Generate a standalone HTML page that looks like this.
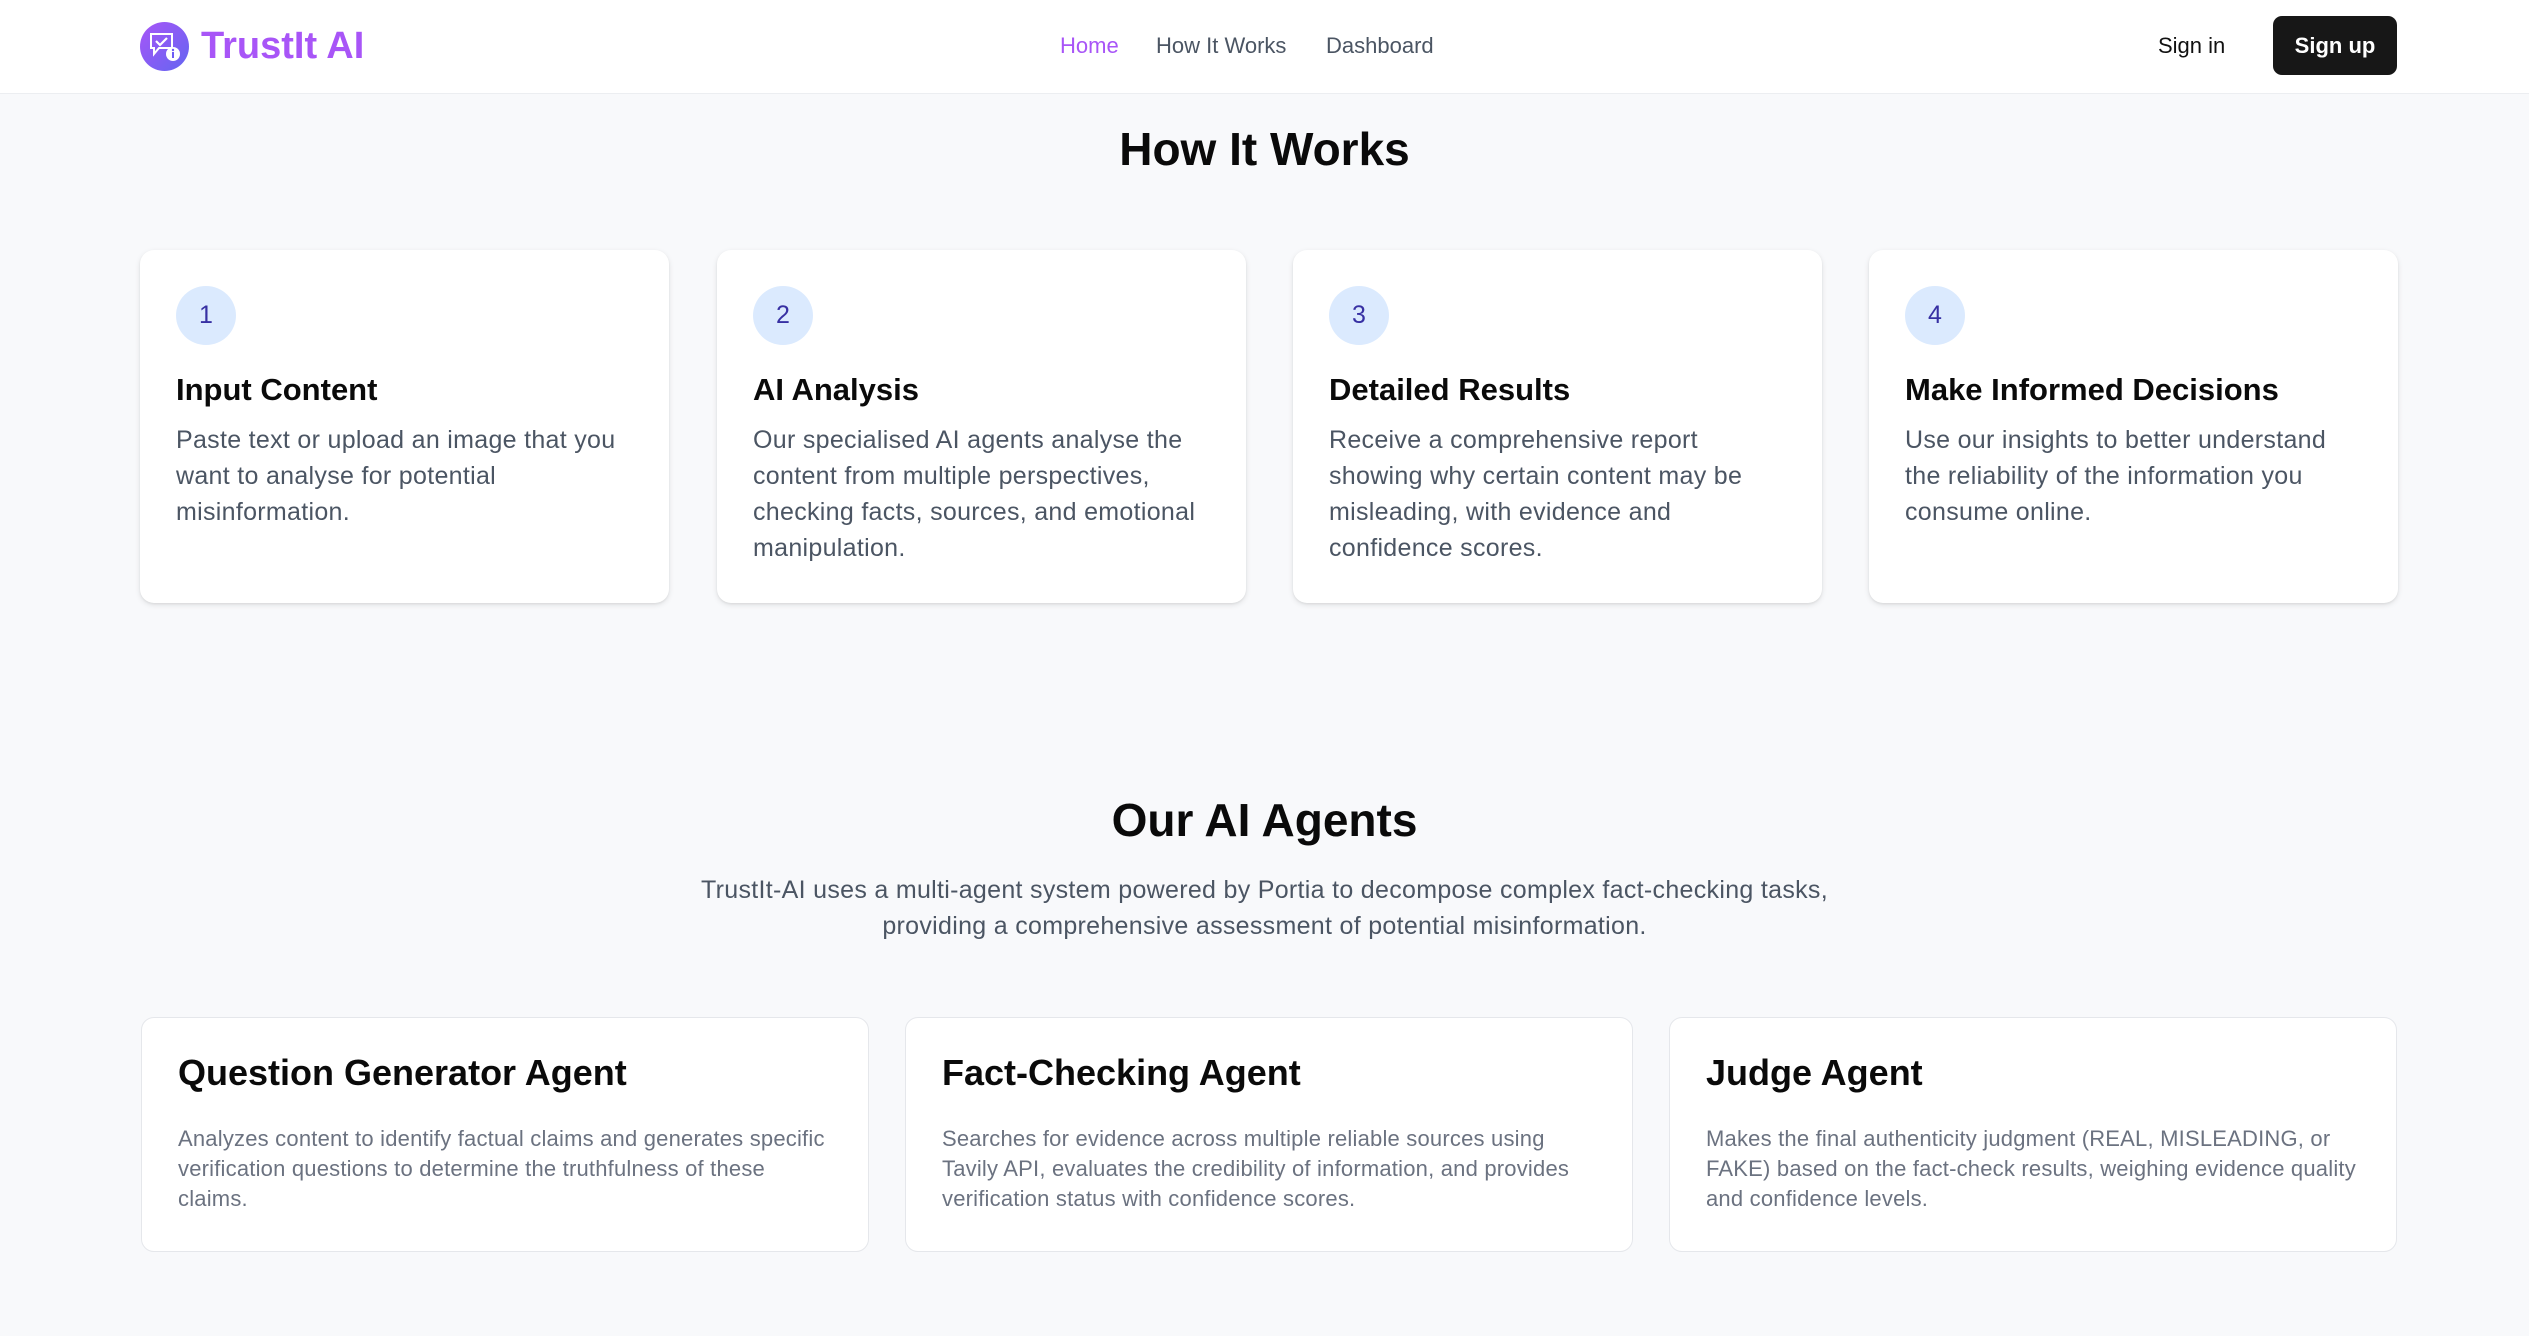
<!DOCTYPE html>
<html><head><meta charset="utf-8"><style>
*{margin:0;padding:0;box-sizing:border-box}
body{width:2529px;height:1336px;background:#f8f9fb;font-family:"Liberation Sans",Arial,sans-serif;position:relative;overflow:hidden;color:#0a0a0a}
.hdr{position:absolute;left:0;top:0;width:2529px;height:94px;background:#fff;border-bottom:1px solid #eceef1}
.a{position:absolute;white-space:nowrap}
.nav{font-size:22px;color:#4b5563;top:33px}
h2{position:absolute;left:0;width:2529px;text-align:center;font-size:46px;font-weight:700}
.card{position:absolute;top:250px;width:529px;height:353px;background:#fff;border-radius:14px;box-shadow:0 2px 6px rgba(0,0,0,.1),0 1px 2px rgba(0,0,0,.06);padding:36px}
.num{width:60px;height:59px;border-radius:50%;background:#dbeafe;color:#3730a3;font-size:25px;text-align:center;line-height:59px}
.card h3{font-size:31px;font-weight:600;margin-top:25px;line-height:40px}
.card p{font-size:25px;line-height:36px;color:#4b5563;margin-top:12px;letter-spacing:0.3px;padding-right:14px}
.ag{position:absolute;top:1017px;width:728px;height:235px;background:#fff;border:1px solid #e5e7eb;border-radius:13px;padding:32px 36px}
.ag h3{font-size:36px;font-weight:600;line-height:46px}
.ag p{font-size:22px;line-height:30px;color:#6b7280;margin-top:28px;letter-spacing:0.2px}
</style></head><body>
<div class="hdr"></div>
<svg class="a" style="left:140px;top:22px" width="49" height="49" viewBox="0 0 49 49">
<defs><linearGradient id="g" x1="0" y1="0" x2="1" y2="1"><stop offset="0" stop-color="#a855f7"/><stop offset="1" stop-color="#6366f1"/></linearGradient></defs>
<circle cx="24.5" cy="24.5" r="24.5" fill="url(#g)"/>
<path d="M11 12h21v14H19l-5 6v-6h-3z" fill="none" stroke="#fff" stroke-width="2"/>
<path d="M16 19l4 4 7-7" fill="none" stroke="#fff" stroke-width="2.2"/>
<circle cx="33" cy="32" r="7" fill="#fff"/><rect x="32" y="30" width="2" height="6" fill="#6d5cf5"/><circle cx="33" cy="28" r="1.2" fill="#6d5cf5"/>
</svg>
<div class="a" style="left:201px;top:22px;font-size:38px;font-weight:700;color:#a855f7;line-height:48px">TrustIt AI</div>
<div class="a nav" style="left:1060px;color:#a855f7">Home</div>
<div class="a nav" style="left:1156px">How It Works</div>
<div class="a nav" style="left:1326px">Dashboard</div>
<div class="a" style="left:2158px;top:33px;font-size:22px;color:#111">Sign in</div>
<div class="a" style="left:2273px;top:16px;width:124px;height:59px;background:#171717;border-radius:9px;color:#fff;font-size:22px;text-align:center;line-height:59px;font-weight:600">Sign up</div>
<h2 style="top:122px">How It Works</h2>
<div class="card" style="left:140px"><div class="num">1</div><h3>Input Content</h3><p>Paste text or upload an image that you want to analyse for potential misinformation.</p></div>
<div class="card" style="left:717px"><div class="num">2</div><h3>AI Analysis</h3><p>Our specialised AI agents analyse the content from multiple perspectives, checking facts, sources, and emotional manipulation.</p></div>
<div class="card" style="left:1293px"><div class="num">3</div><h3>Detailed Results</h3><p>Receive a comprehensive report showing why certain content may be misleading, with evidence and confidence scores.</p></div>
<div class="card" style="left:1869px"><div class="num">4</div><h3>Make Informed Decisions</h3><p>Use our insights to better understand the reliability of the information you consume online.</p></div>
<h2 style="top:793px">Our AI Agents</h2>
<div class="a" style="left:0;width:2529px;top:872px;text-align:center;font-size:25px;line-height:36px;color:#4b5563;letter-spacing:0.3px">TrustIt-AI uses a multi-agent system powered by Portia to decompose complex fact-checking tasks,<br>providing a comprehensive assessment of potential misinformation.</div>
<div class="ag" style="left:141px"><h3>Question Generator Agent</h3><p>Analyzes content to identify factual claims and generates specific verification questions to determine the truthfulness of these<br>claims.</p></div>
<div class="ag" style="left:905px"><h3>Fact-Checking Agent</h3><p>Searches for evidence across multiple reliable sources using<br>Tavily API, evaluates the credibility of information, and provides verification status with confidence scores.</p></div>
<div class="ag" style="left:1669px"><h3>Judge Agent</h3><p>Makes the final authenticity judgment (REAL, MISLEADING, or<br>FAKE) based on the fact-check results, weighing evidence quality<br>and confidence levels.</p></div>
</body></html>
